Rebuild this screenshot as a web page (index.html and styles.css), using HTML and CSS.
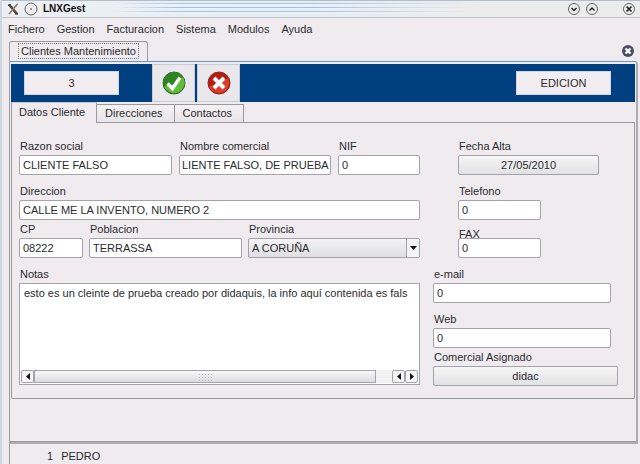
FILE: index.html
```html
<!DOCTYPE html>
<html lang="es">
<head>
  <meta charset="UTF-8">
  <meta name="viewport" content="width=device-width, initial-scale=1.0">
  <title>LNXGest</title>
  <link rel="stylesheet" href="styles.css">
</head>
<body>
  <header class="titlebar">
    <svg class="logo" width="12" height="12" viewBox="0 0 12 12"><path d="M2 1.5l8 9.5" stroke="#4b443c" stroke-width="2.6"/><path d="M10.500 1L2 11" stroke="#8c7a62" stroke-width="1.600"/><path d="M1 2h3M8 11h3" stroke="#2f2b28"/></svg>
    <svg width="14" height="14" viewBox="0 0 14 14"><circle cx="7" cy="7" r="6" fill="#eeeef0" stroke="#666"/><circle cx="7" cy="7" r="1" fill="#777"/></svg>
    <h1>LNXGest</h1>
    <div class="stripes"></div>
    <div class="window-buttons">
      <button type="button" aria-label="Minimizar"><svg width="14" height="14" viewBox="0 0 14 14"><circle cx="7" cy="7" r="5.500" fill="#eee" stroke="#666"/><path d="M4.500 6L7 8.500 9.500 6" fill="none" stroke="#222" stroke-width="1.500"/></svg></button>
      <button type="button" aria-label="Maximizar"><svg width="14" height="14" viewBox="0 0 14 14"><circle cx="7" cy="7" r="5.500" fill="#eee" stroke="#666"/><path d="M4.500 8.500L7 6l2.500 2.500" fill="none" stroke="#222" stroke-width="1.500"/></svg></button>
      <button type="button" class="close" aria-label="Cerrar"><svg width="14" height="14" viewBox="0 0 14 14"><circle cx="7" cy="7" r="5.500" fill="#eee" stroke="#666"/><path d="M4.500 4.500l5 5M9.500 4.500l-5 5" stroke="#222" stroke-width="1.700"/></svg></button>
    </div>
  </header>

  <nav class="menu">
    <button type="button">Fichero</button>
    <button type="button">Gestion</button>
    <button type="button">Facturacion</button>
    <button type="button">Sistema</button>
    <button type="button">Modulos</button>
    <button type="button">Ayuda</button>
  </nav>

  <div class="main-tabs">
    <button type="button" class="main-tab"><span>Clientes Mantenimiento</span></button>
    <button type="button" class="tab-close" aria-label="Cerrar pestaña"><svg width="14" height="14" viewBox="0 0 14 14"><circle cx="7" cy="7" r="6" fill="#4d4d64"/><path d="M4.500 4.500l5 5M9.500 4.500l-5 5" stroke="#fff" stroke-width="2.200"/></svg></button>
  </div>

  <main class="window">
    <div class="toolbar">
      <button type="button" class="flat">3</button>
      <div class="actions">
        <button type="button" class="icon" aria-label="Aceptar">
          <svg width="24" height="24" viewBox="0 0 24 24"><circle cx="12" cy="12" r="11" fill="#2d8420" stroke="#39702d"/><path d="M2 15c5 1 12-2 19-9a11 11 0 0 1-4 15A11 11 0 0 1 2 15z" fill="#5fbd38"/><path d="M5.500 12.500l5 5L18 6.500" fill="none" stroke="#fff" stroke-width="3.500"/></svg>
        </button>
        <button type="button" class="icon" aria-label="Cancelar">
          <svg width="24" height="24" viewBox="0 0 24 24"><circle cx="12" cy="12" r="11" fill="#b81c16" stroke="#8d2a22"/><path d="M2 15c6 0 13-3 19-8a11 11 0 0 1-4 14A11 11 0 0 1 2 15z" fill="#de3c2b"/><path d="M7 7l10 10M17 7L7 17" stroke="#fff" stroke-width="4"/></svg>
        </button>
      </div>
      <button type="button" class="flat edit">EDICION</button>
    </div>

    <div class="tabs">
      <button type="button" class="tab active">Datos Cliente</button>
      <button type="button" class="tab">Direcciones</button>
      <button type="button" class="tab">Contactos</button>
      <div class="tab-fill"></div>
    </div>

    <form class="panel">
      <div class="left">
        <div class="row names">
          <div class="field"><label for="razon">Razon social</label><input type="text" id="razon" value="CLIENTE FALSO"></div>
          <div class="field"><label for="nombre">Nombre comercial</label><input type="text" id="nombre" class="full" value="LIENTE FALSO, DE PRUEBA"></div>
          <div class="field"><label for="nif">NIF</label><input type="text" id="nif" value="0"></div>
        </div>
        <div class="field spaced"><label for="direccion">Direccion</label><input type="text" id="direccion" value="CALLE ME LA INVENTO, NUMERO 2"></div>
        <div class="row city">
          <div class="field"><label for="cp">CP</label><input type="text" id="cp" value="08222"></div>
          <div class="field"><label for="poblacion">Poblacion</label><input type="text" id="poblacion" value="TERRASSA"></div>
          <div class="field">
            <label for="provincia">Provincia</label>
            <div class="select">
              <select id="provincia"><option>A CORUÑA</option></select>
              <span class="arrow"><svg width="7" height="4" viewBox="0 0 7 4"><path d="M0 0h7L3.500 4z" fill="#111"/></svg></span>
            </div>
          </div>
        </div>
        <div class="field spaced">
          <label for="notas">Notas</label>
          <div class="notes">
            <textarea id="notas" wrap="off">esto es un cleinte de prueba creado por didaquis, la info aquí contenida es fals</textarea>
            <div class="scrollbar">
              <button type="button" aria-label="Izquierda"><svg width="4" height="7" viewBox="0 0 4 7"><path d="M4 0v7L0 3.500z" fill="#111"/></svg></button>
              <div class="track"><div class="thumb"><span class="grip"></span></div></div>
              <button type="button" aria-label="Anterior"><svg width="4" height="7" viewBox="0 0 4 7"><path d="M4 0v7L0 3.500z" fill="#111"/></svg></button>
              <button type="button" aria-label="Derecha"><svg width="4" height="7" viewBox="0 0 4 7"><path d="M0 0v7l4-3.500z" fill="#111"/></svg></button>
            </div>
          </div>
        </div>
      </div>

      <div class="right">
        <div class="contact">
          <div class="field date"><label for="fecha">Fecha Alta</label><button type="button" id="fecha" class="raised">27/05/2010</button></div>
          <div class="field phone spaced"><label for="telefono">Telefono</label><input type="text" id="telefono" value="0"></div>
          <div class="field phone tight"><label for="fax" class="low">FAX</label><input type="text" id="fax" value="0"></div>
        </div>
        <div class="field online spaced"><label for="email">e-mail</label><input type="text" id="email" value="0"></div>
        <div class="field online spaced"><label for="web">Web</label><input type="text" id="web" value="0"></div>
        <div class="field"><label for="comercial">Comercial Asignado</label><button type="button" id="comercial" class="raised">didac</button></div>
      </div>
    </form>
  </main>

  <footer class="status"><span>1</span><span>PEDRO</span></footer>
</body>
</html>
```
FILE: styles.css
```css
* {
    box-sizing: border-box;
}

body {
    font-family: "Liberation Sans", Arial, sans-serif;
    font-size: 11px;
    line-height: 16px;
    color: #2b2b2e;
    margin: 0;
    background-color: #f0ebee;
    display: flex;
    flex-direction: column;
    height: 100vh;
    overflow: hidden;
    border-left: 2px solid #cdd7df;
}

button, input, select, textarea {
    font: inherit;
    color: inherit;
    margin: 0;
    padding: 0;
}

button {
    background: none;
    border: none;
}

svg {
    display: block;
}

/* title bar */
.titlebar {
    display: flex;
    align-items: center;
    gap: 5px;
    height: 18px;
    padding: 0 4px 0 5px;
    background: linear-gradient(to right, #edf0f2, #e3edf8 45%, #ececec 85%);
    border-top: 1px solid #b5bdc8;
    border-bottom: 1px solid #c3c3c7;
}

.titlebar h1 {
    font-size: 10px;
    margin: 0;
    color: #111;
}

.stripes {
    flex: 1;
    height: 12px;
    margin-left: 22px;
    background: linear-gradient(to right, #ecf0f4, rgba(236, 240, 244, 0) 15%, rgba(236, 236, 236, 0) 45%, #ececec 80%),
        repeating-linear-gradient(to bottom, #a9c2dc 0, #a9c2dc 1px, #eef4fb 1px, #e2ecf7 4px);
}

.window-buttons {
    display: flex;
    gap: 4px;
}

.window-buttons .close {
    margin-left: 19px;
}

/* menu */
.menu {
    display: flex;
    gap: 12px;
    padding: 3px 6px 4px;
}

.main-tabs {
    display: flex;
    align-items: flex-end;
    justify-content: space-between;
    height: 20px;
    padding: 0 5px 0 7px;
}

.main-tab {
    height: 20px;
    padding: 0 8px 2px;
    border: 1px solid #9a9aa0;
    border-bottom: none;
    border-radius: 3px 3px 0 0;
}

.main-tab span {
    display: block;
    padding: 0 2px;
    line-height: 14px;
    border: 1px dotted #77777c;
}

.tab-close {
    margin-bottom: 3px;
}

.window {
    flex: 1;
    margin: 0 2px 0 7px;
    border: 1px solid #9a9aa2;
    border-top-color: #6797c8;
    border-right: 2px solid #b0abb2;
    border-radius: 0 3px 0 0;
    padding: 2px 1px 0;
}

/* blue toolbar */
.toolbar {
    display: flex;
    align-items: center;
    height: 38px;
    padding: 0 24px 0 13px;
    background-color: #003f80;
}

.flat {
    width: 95px;
    height: 24px;
    background-color: #f1edf1;
    border: 1px solid #d0d7e3;
}

.actions {
    display: flex;
    gap: 2px;
    height: 100%;
    margin-left: 33px;
}

.icon {
    display: flex;
    align-items: center;
    justify-content: center;
    width: 43px;
    background-color: #e9e8ed;
    border: 1px solid #c9cbd5;
}

.edit {
    margin-left: auto;
}

/* form tabs */
.tabs {
    display: flex;
    align-items: flex-end;
    height: 21px;
}

.tab {
    height: 19px;
    padding: 0 11px 2px 8px;
    background: linear-gradient(#f5f2f4, #e8e5e8);
    border: 1px solid #98989e;
    border-left: none;
}

.tab.active {
    height: 21px;
    padding: 0 11px 2px 7px;
    background: none;
    border-top-color: #c9c6cc;
    border-left: 1px solid #98989e;
    border-bottom: none;
}

.tab-fill {
    flex: 1;
    border-bottom: 1px solid #98989e;
}

.panel {
    display: grid;
    grid-template-columns: 401fr 185fr;
    gap: 13px;
    height: 276px;
    padding: 16px 16px 0 7px;
    border: 1px solid #98989e;
    border-top: none;
    border-radius: 0 0 2px 2px;
}

.left, .right {
    min-width: 0;
}

.row {
    display: grid;
}

.names {
    grid-template-columns: 153fr 152fr 82fr;
    gap: 7px;
}

.city {
    grid-template-columns: 64fr 153fr 172fr;
    gap: 6px;
    margin-top: 2px;
}

.field {
    display: flex;
    flex-direction: column;
    min-width: 0;
}

.spaced {
    margin-top: 9px;
}

.tight {
    margin-top: 2px;
}

.field label {
    height: 16px;
    line-height: 14px;
    padding-left: 1px;
    overflow: hidden;
}

/* sits partly behind its text box */
.field .low {
    line-height: 24px;
}

.field input {
    width: 100%;
    height: 20px;
    padding: 0 3px;
    background-color: #fff;
    border: 1px solid #a3a3a8;
    border-radius: 2px;
}

.field .full {
    padding: 0 0 0 2px;
}

.raised {
    height: 20px;
    background: linear-gradient(#f7f7f7, #e2e1e3);
    border: 1px solid #a3a3a8;
    border-radius: 2px;
}

.select {
    display: flex;
    position: relative;
}

.select select {
    appearance: none;
    width: 100%;
    height: 20px;
    padding: 0 3px;
    background: linear-gradient(#f5f4f5, #dfdee0);
    border: 1px solid #a3a3a8;
    border-radius: 2px;
}

.arrow {
    position: absolute;
    top: 1px;
    right: 1px;
    bottom: 1px;
    width: 13px;
    display: flex;
    align-items: center;
    justify-content: center;
    background-color: #f4f4f5;
    border-left: 1px solid #a3a3a8;
    pointer-events: none;
}

.notes {
    height: 102px;
    display: flex;
    flex-direction: column;
    background-color: #fff;
    border: 1px solid #a3a3a8;
}

.notes textarea {
    flex: 1;
    padding: 1px 0 0 4px;
    background: none;
    border: none;
    resize: none;
    overflow: hidden;
    white-space: pre;
}

.scrollbar {
    display: flex;
    height: 13px;
    margin: 0 1px 1px;
}

.scrollbar button {
    display: flex;
    align-items: center;
    justify-content: center;
    width: 13px;
    background-color: #f5f5f5;
    border: 1px solid #a3a3a8;
    border-radius: 2px;
}

.track {
    flex: 1;
    padding-right: 16px;
    background-color: #f3f1f2;
}

.thumb {
    display: flex;
    align-items: center;
    justify-content: center;
    height: 13px;
    background: linear-gradient(#f8f8f8, #dddcde);
    border: 1px solid #a3a3a8;
}

.grip {
    width: 14px;
    height: 8px;
    background: radial-gradient(circle, #b5b5b8 1px, transparent 1px) 0 0 / 3px 3px;
}

/* right column */
.contact {
    padding: 0 19px 0 25px;
}

.phone input {
    width: 59%;
}

.online {
    margin-right: 7px;
}

.online + .field:last-child {
    margin-top: 2px;
}

.status {
    display: flex;
    gap: 8px;
    height: 22px;
    margin: 0 2px 0 7px;
    padding: 4px 0 0 37px;
    border-top: 2px solid #b0abb2;
    border-left: 1px solid #98989e;
}
```
